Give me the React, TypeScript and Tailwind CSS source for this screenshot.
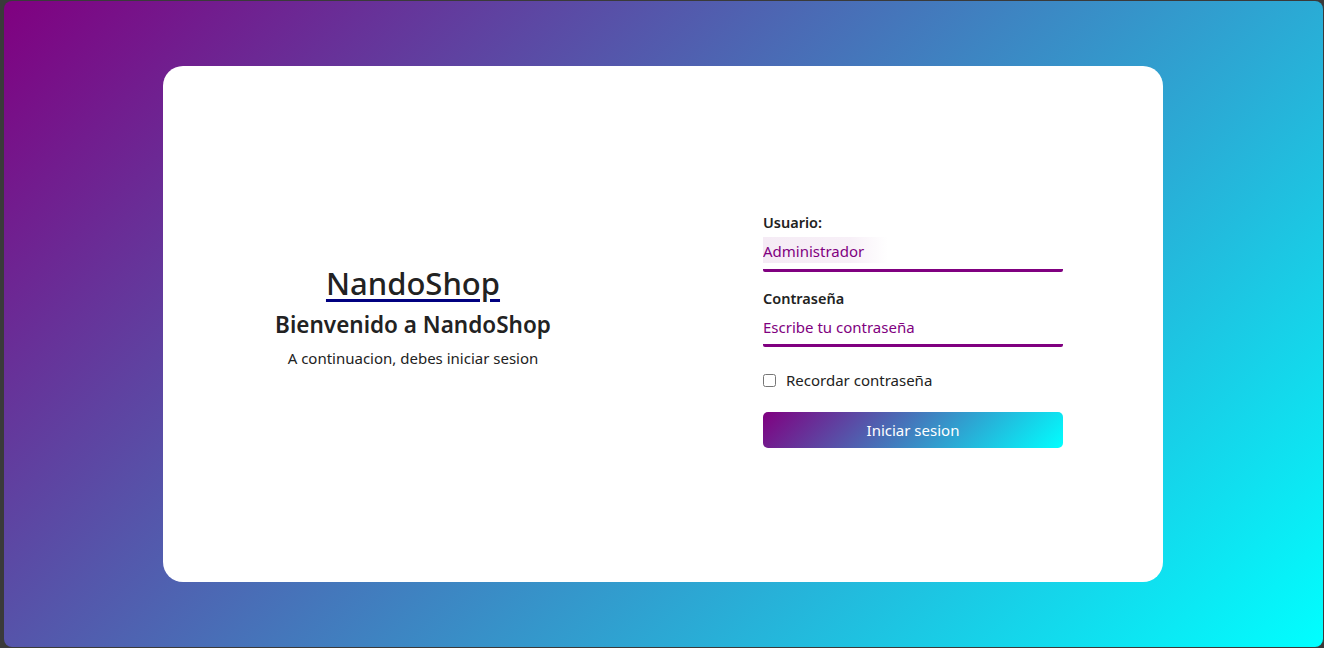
import React from "react";

export default function App() {
  const font = { fontFamily: '"Noto Sans", "Open Sans", sans-serif' };
  return (
    <div
      className="w-[1324px] h-[648px] bg-[#3a3a3a] pl-[4px] pt-[1px] pr-[1px] pb-[1px]"
      style={font}
    >
      <div className="w-full h-full rounded-[8px] bg-[linear-gradient(135deg,#800080,#00ffff)] flex items-center justify-center pr-[1px]">
        <div className="w-[1000px] h-[516px] rounded-[20px] bg-white grid grid-cols-2">
          <div className="flex flex-col items-center justify-center text-[#222] pb-[15px]">
            <a href="#" className="text-[31px] font-medium leading-[38px] underline decoration-[#000080] decoration-[3px] underline-offset-[4px] text-[#222]">
              NandoShop
            </a>
            <h2 className="text-[22.5px] font-semibold leading-[30px] mt-[8px]">Bienvenido a NandoShop</h2>
            <p className="text-[15px] leading-[22px] mt-[7px]">A continuacion, debes iniciar sesion</p>
          </div>
          <div className="flex flex-col justify-center items-center pt-[12px]">
            <form className="w-[300px] flex flex-col">
              <label className="text-[14.5px] font-semibold text-[#222] leading-[20px]">Usuario:</label>
              <div className="mt-[7px] relative">
                <div className="absolute left-0 top-[-2px] w-[125px] h-[26px] bg-[linear-gradient(90deg,rgba(128,0,128,0.08),rgba(128,0,128,0.06)_70%,rgba(255,255,255,0))]" />
                <input
                  defaultValue="Administrador"
                  className="relative w-full bg-transparent outline-none text-[15px] leading-[22px] text-[#800080] pb-[7px] border-b-[3px] border-[#800080] rounded-b-[2px]"
                  style={font}
                />
              </div>
              <label className="text-[14.5px] font-semibold text-[#222] leading-[20px] mt-[16px]">Contraseña</label>
              <input
                placeholder="Escribe tu contraseña"
                type="password"
                className="mt-[8px] w-full bg-transparent outline-none text-[15px] leading-[22px] text-[#800080] placeholder:text-[#800080] pb-[6px] border-b-[3px] border-[#800080] rounded-b-[2px]"
                style={font}
              />
              <label className="flex items-center mt-[23px] text-[15px] text-[#222] leading-[20px]">
                <input type="checkbox" className="w-[13px] h-[13px] ml-[0px] mr-[10px] accent-[#800080]" />
                Recordar contraseña
              </label>
              <button
                type="button"
                className="mt-[22px] h-[36px] w-full rounded-[5px] bg-[linear-gradient(135deg,#800080,#00ffff)] text-white text-[15px]"
                style={font}
              >
                Iniciar sesion
              </button>
            </form>
          </div>
        </div>
      </div>
    </div>
  );
}
